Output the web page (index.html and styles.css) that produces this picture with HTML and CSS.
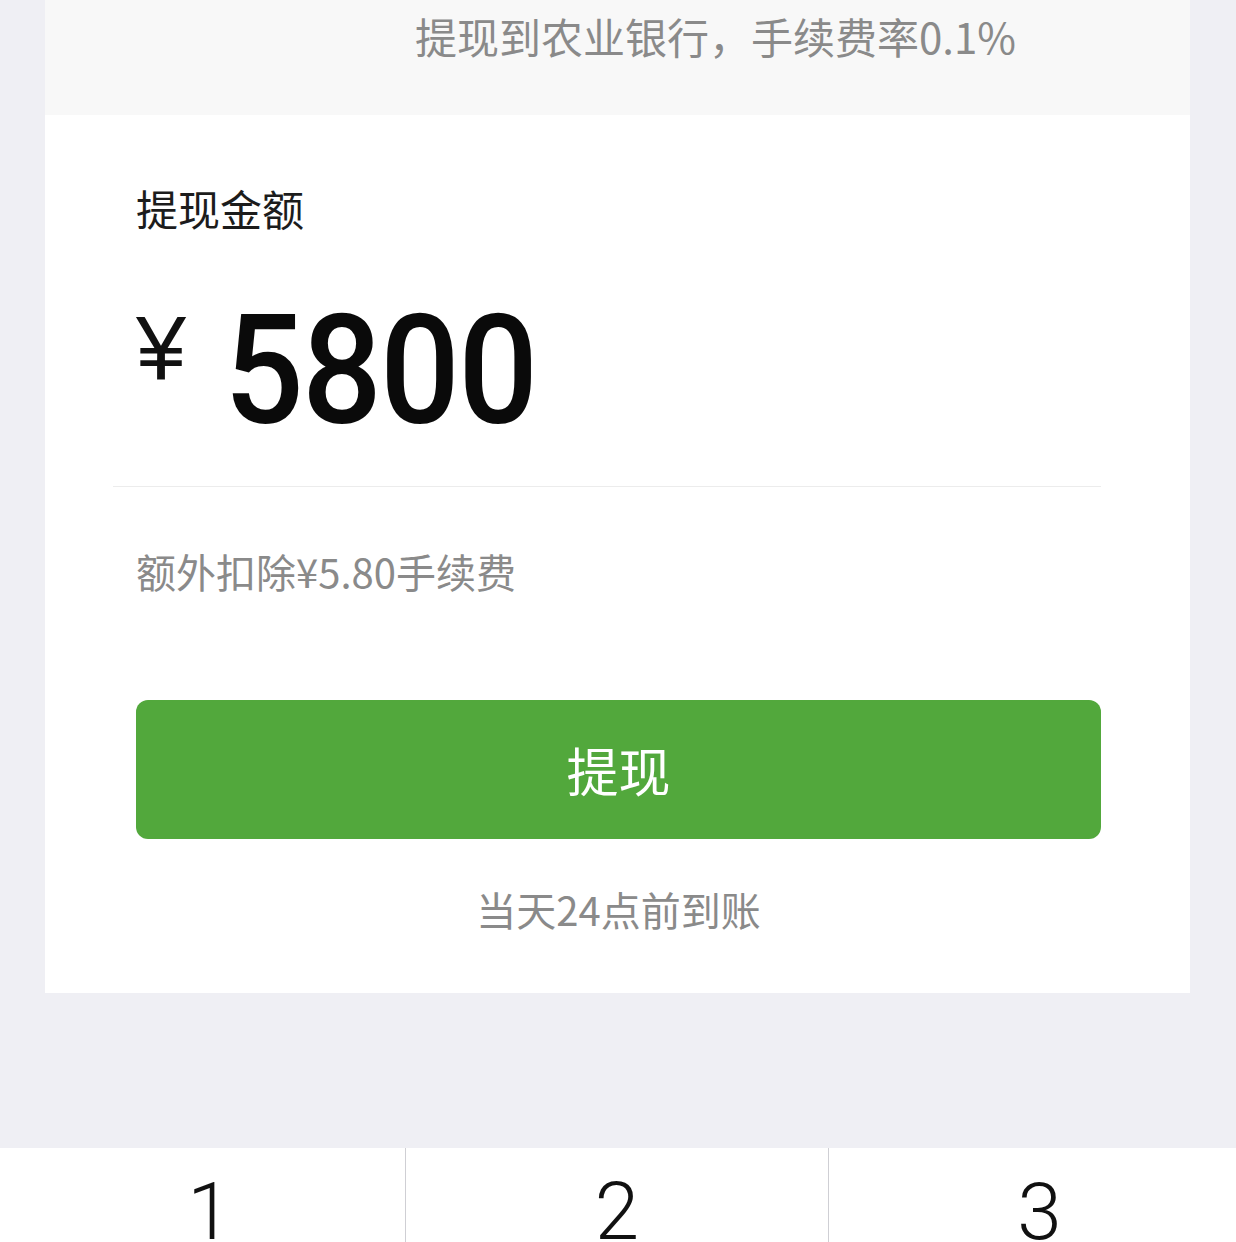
FILE: index.html
```html
<!DOCTYPE html>
<html lang="zh-CN">
  <head>
    <meta charset="UTF-8" />
    <meta name="viewport" content="width=device-width, initial-scale=1.0" />
    <title>提现</title>
    <link rel="stylesheet" href="styles.css">
  </head>
  <body>
    <div class="page">
      <div class="card">
        <div class="card-head">提现到农业银行，手续费率0.1%</div>
        <div class="card-body">
          <p class="label">提现金额</p>
          <div class="amount">
            <span class="yen">¥</span>
            <span class="num">5800</span>
          </div>
          <div class="divider"></div>
          <p class="fee">额外扣除¥5.80手续费</p>
          <button class="submit">提现</button>
          <p class="arrival">当天24点前到账</p>
        </div>
      </div>

      <div class="keypad">
        <div class="key">1</div>
        <div class="key">2</div>
        <div class="key">3</div>
      </div>
    </div>
  </body>
</html>
```

FILE: styles.css
```css
* {
  box-sizing: border-box;
  margin: 0;
  padding: 0;
}
body {
  font-family: "Noto Sans CJK SC", "Noto Sans", sans-serif;
  background: #efeff4;
  height: 1242px;
  overflow: hidden;
}
.card {
  margin: 0 46px 0 45px;
  background: #fff;
}
.card-head {
  height: 115px;
  padding: 15px 0 0 370px;
  background: #f8f8f8;
  color: #8a8a8a;
  font-size: 42px;
  line-height: 42px;
}
.card-body {
  padding: 68px 89px 59px 91px;
}
.label {
  font-size: 42px;
  line-height: 50px;
  color: #1c1c1c;
}
.amount {
  display: flex;
  align-items: flex-start;
  margin-top: 63px;
  height: 150px;
}
.yen {
  font-family: "Liberation Sans", sans-serif;
  font-size: 90px;
  line-height: 90px;
  margin-top: 7px;
  color: #111;
}
/* digits are narrower in the original font */
.num {
  display: inline-block;
  font-family: "Roboto", sans-serif;
  font-weight: 500;
  font-size: 152px;
  line-height: 150px;
  letter-spacing: -2px;
  margin-left: 38px;
  color: #0a0a0a;
  transform: scaleX(0.925);
  transform-origin: left center;
}
.divider {
  height: 1px;
  background: #ececec;
  margin: 40px 0 0 -23px;
}
.fee {
  margin-top: 59px;
  font-size: 40px;
  line-height: 50px;
  color: #8a8a8a;
}
.submit {
  display: block;
  width: 100%;
  height: 139px;
  margin-top: 104px;
  border: none;
  border-radius: 12px;
  background: #52a83c;
  color: #fff;
  font-family: inherit;
  font-size: 52px;
  cursor: pointer;
}
.arrival {
  margin-top: 45px;
  text-align: center;
  font-size: 40px;
  line-height: 50px;
  color: #8a8a8a;
}
.keypad {
  display: grid;
  grid-template-columns: 406px 423px 1fr;
  margin-top: 155px;
  background: #fff;
}
.key {
  height: 150px;
  padding-top: 24px;
  text-align: center;
  font-family: "Roboto", sans-serif;
  font-weight: 300;
  font-size: 80px;
  line-height: 80px;
  color: #111;
  border-right: 1px solid #cfcfd4;
}
.key:first-child {
  padding-left: 14px;
}
.key:last-child {
  padding-left: 14px;
  border-right: none;
}
```
